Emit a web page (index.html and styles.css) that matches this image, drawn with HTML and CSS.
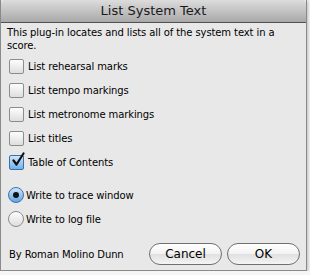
FILE: index.html
```html
<!DOCTYPE html>
<html lang="en">
<head>
  <meta charset="UTF-8">
  <title>List System Text</title>
  <link rel="stylesheet" href="styles.css">
</head>
<body>
  <div class="window">
    <div class="titlebar">List System Text</div>
    <div class="content">
      <p class="intro">This plug-in locates and lists all of the system text in a score.</p>
      <div class="options">
        <label class="check"><span class="box"></span>List rehearsal marks</label>
        <label class="check"><span class="box"></span>List tempo markings</label>
        <label class="check"><span class="box"></span>List metronome markings</label>
        <label class="check"><span class="box"></span>List titles</label>
        <label class="check"><span class="box checked">
          <svg viewBox="0 0 16 16" width="16" height="16"><path d="M3.5 8.5 L6.5 12.5 L13.5 1.5" fill="none" stroke="#111" stroke-width="2.2" stroke-linecap="round" stroke-linejoin="round"/></svg>
        </span>Table of Contents</label>
      </div>
      <div class="radios">
        <label class="radio"><span class="dot on"></span>Write to trace window</label>
        <label class="radio"><span class="dot"></span>Write to log file</label>
      </div>
      <div class="footer">
        <span class="author">By Roman Molino Dunn</span>
        <div class="buttons">
          <button class="btn">Cancel</button>
          <button class="btn ok">OK</button>
        </div>
      </div>
    </div>
  </div>
</body>
</html>
```

FILE: styles.css
```css
body {
  margin: 0;
  background: #f6f6f6;
  font-family: "DejaVu Sans", "Liberation Sans", sans-serif;
  font-size: 10px;
  letter-spacing: -0.1px;
  color: #000;
}
.window {
  width: 305px;
  height: 270px;
  background: #e8e8e8;
  border: 1px solid #8a8a8a;
  border-top: none;
  box-shadow: 1px 1px 3px rgba(0,0,0,0.25);
  display: flex;
  flex-direction: column;
}
.titlebar {
  height: 22px;
  line-height: 22px;
  text-align: center;
  font-size: 13px;
  letter-spacing: 0;
  color: #1a1a1a;
  background: linear-gradient(#dcdcdc, #a9a9a9);
  border-bottom: 1px solid #515151;
  border-radius: 4px 4px 0 0;
}
.content {
  flex: 1;
  padding: 3px 6px 5px 6px;
  display: flex;
  flex-direction: column;
}
.intro {
  margin: 0;
  line-height: 13px;
}
.options {
  margin-top: 7px;
  display: flex;
  flex-direction: column;
  gap: 9px;
}
.check, .radio {
  display: flex;
  align-items: center;
  height: 15px;
}
.radio {
  height: 16px;
}
.box {
  width: 13px;
  height: 13px;
  margin: 0 4px 0 2px;
  border: 1px solid #8c8c8c;
  border-radius: 2px;
  background: linear-gradient(#fdfdfd, #dedede);
  position: relative;
}
.box.checked {
  border-color: #3e6ea8;
  background: linear-gradient(#cfe6fb, #6fb1ea);
}
.box svg {
  position: absolute;
  left: 0;
  top: -4px;
}
.radios {
  margin-top: 17px;
  display: flex;
  flex-direction: column;
  gap: 8px;
}
.dot {
  width: 14px;
  height: 14px;
  margin: 0 2px 0 1px;
  border: 1px solid #8c8c8c;
  border-radius: 50%;
  background: linear-gradient(#fdfdfd, #dedede);
  display: flex;
  align-items: center;
  justify-content: center;
}
.dot.on {
  border-color: #3e6ea8;
  background: linear-gradient(#cfe6fb, #5fa6e6);
}
.dot.on::after {
  content: "";
  width: 6px;
  height: 6px;
  border-radius: 50%;
  background: #111;
}
.footer {
  margin-top: auto;
  display: flex;
  align-items: center;
  justify-content: space-between;
  padding-left: 2px;
}
.buttons {
  display: flex;
  gap: 5px;
}
.btn {
  font-family: "DejaVu Sans", "Liberation Sans", sans-serif;
  font-size: 12px;
  color: #000;
  width: 73px;
  height: 22px;
  border: 1px solid #6f6f6f;
  border-radius: 11px;
  background: linear-gradient(#ffffff, #f2f2f2 50%, #e0e0e0 51%, #f4f4f4);
  padding: 0;
}
```
